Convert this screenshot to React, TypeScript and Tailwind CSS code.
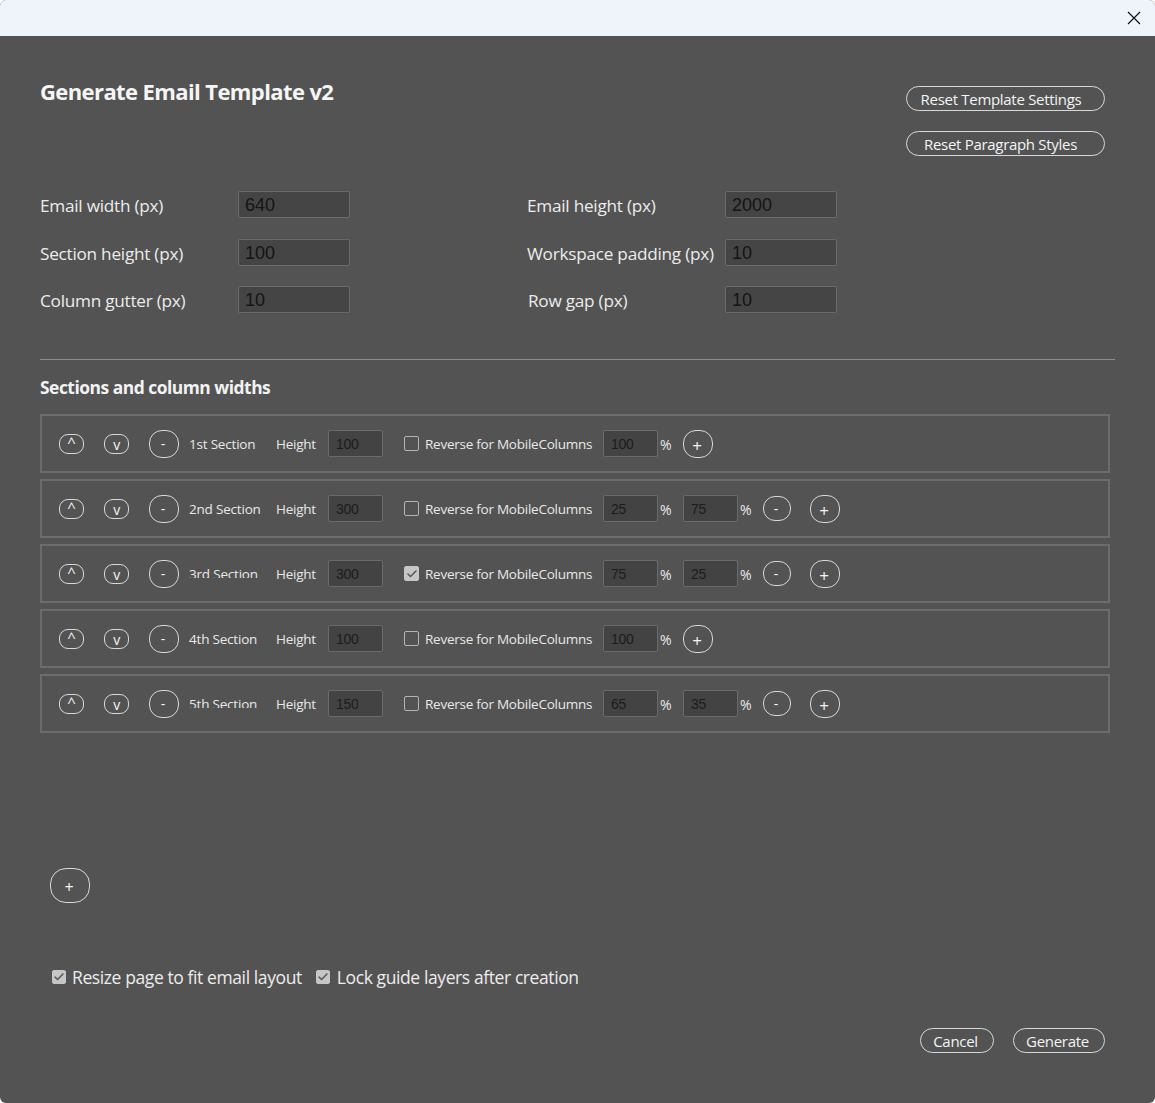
import { Check } from 'lucide-react';

const FONT = "font-['Open_Sans','Noto_Sans',sans-serif]";

interface PillProps {
  label: string;
  className: string;
}

function Pill({ label, className }: PillProps) {
  return (
    <button
      type="button"
      className={`flex shrink-0 items-center justify-center border border-[#d8d8d8] bg-transparent text-[#f4f4f4] ${className}`}
    >
      {label}
    </button>
  );
}

function Field({ label, value, labelWidth }: { label: string; value: string; labelWidth: string }) {
  return (
    <div className="flex h-[27px] items-center">
      <span className={`pt-[3px] text-[17.2px] tracking-[-0.25px] whitespace-nowrap text-[#ececec] ${labelWidth}`}>{label}</span>
      <input
        readOnly
        value={value}
        className="h-[27px] w-[112px] rounded-[2px] border border-[#6a6a6a] bg-[#454545] px-[6px] pt-[2px] font-['Liberation_Sans',sans-serif] text-[18px] text-[#141414] outline-none"
      />
    </div>
  );
}

function SmallInput({ value }: { value: string }) {
  return (
    <input
      readOnly
      value={value}
      className="h-[27px] w-[55px] shrink-0 rounded-[2px] border border-[#6a6a6a] bg-[#434343] px-[7px] font-['Liberation_Sans',sans-serif] text-[14px] text-[#1c1c1c] outline-none"
    />
  );
}

function Percent() {
  return <span className="w-[25px] shrink-0 pt-px pl-[2px] text-[14px] text-[#e8e8e8]">%</span>;
}

function Tick({ checked, size }: { checked: boolean; size: string }) {
  return (
    <span
      className={`flex shrink-0 items-center justify-center rounded-[2px] border ${size} ${
        checked ? 'border-[#c6c6c6] bg-[#c6c6c6]' : 'border-[#b4b4b4] bg-transparent'
      }`}
    >
      {checked && <Check size={12} strokeWidth={3} className="text-[#555555]" />}
    </span>
  );
}

interface Section {
  name: string;
  height: string;
  reversed: boolean;
  columns: string[];
  clipped: boolean;
}

const sections: Section[] = [
  { name: '1st Section', height: '100', reversed: false, columns: ['100'], clipped: false },
  { name: '2nd Section', height: '300', reversed: false, columns: ['25', '75'], clipped: false },
  { name: '3rd Section', height: '300', reversed: true, columns: ['75', '25'], clipped: true },
  { name: '4th Section', height: '100', reversed: false, columns: ['100'], clipped: false },
  { name: '5th Section', height: '150', reversed: false, columns: ['65', '35'], clipped: true },
];

function SectionRow({ section }: { section: Section }) {
  const two = section.columns.length === 2;
  return (
    <div className="flex h-[59px] w-[1070px] items-center border-2 border-[#6c6c6c] pl-[17px] text-[13.5px] tracking-[-0.25px] text-[#e8e8e8]">
      <Pill label="^" className="h-[20px] w-[25px] rounded-[9px] pb-[2px] text-[15px] leading-none" />
      <Pill label="v" className="ml-[20px] h-[20px] w-[25px] rounded-[9px] pt-[2px] text-[14px] leading-none" />
      <Pill label="-" className="ml-[20px] h-[28px] w-[30px] rounded-[13px] pr-[2px] text-[14px] leading-none" />
      <div className="ml-[10px] h-[20px] w-[87px]">
        <div className={section.clipped ? 'h-[14px] overflow-hidden leading-[20px] tracking-[-0.2px]' : 'leading-[20px] tracking-[-0.2px]'}>
          {section.name}
        </div>
      </div>
      <span className="w-[52px] pt-px">Height</span>
      <SmallInput value={section.height} />
      <span className="ml-[21px]">
        <Tick checked={section.reversed} size="h-[15px] w-[15px]" />
      </span>
      <span className="ml-[6px] w-[178px] whitespace-nowrap pt-px">Reverse for MobileColumns</span>
      <SmallInput value={section.columns[0]} />
      <Percent />
      {two ? (
        <>
          <SmallInput value={section.columns[1]} />
          <Percent />
          <Pill label="-" className="h-[25px] w-[28px] rounded-[12px] pr-[2px] text-[14px] leading-none" />
          <Pill label="+" className="ml-[19px] h-[28px] w-[30px] rounded-[13px] pt-[3px] pr-[2px] text-[17px] leading-none" />
        </>
      ) : (
        <Pill label="+" className="h-[28px] w-[30px] rounded-[13px] pt-[3px] pr-[2px] text-[17px] leading-none" />
      )}
    </div>
  );
}

export default function App() {
  return (
    <div className={`flex h-[1103px] w-[1155px] flex-col overflow-hidden rounded-[6px] bg-[#535353] ${FONT}`}>
      <div className="flex h-9 shrink-0 items-center justify-end bg-[#eef4f9] pr-[14px]">
        <svg width="14" height="14" viewBox="0 0 14 14" fill="none" stroke="#111111" strokeWidth="1.2">
          <path d="M1 1l12 12M13 1L1 13" />
        </svg>
      </div>

      <div className="flex flex-1 flex-col pl-10">
        <div className="flex h-[120px] items-start justify-between pr-[50px]">
          <h1 className="mt-[38px] text-[22px] leading-[34px] font-bold tracking-[-0.6px] text-[#f5f5f5]">
            Generate Email Template v2
          </h1>
          <div className="mt-[50px] flex flex-col gap-5">
            <Pill label="Reset Template Settings" className="h-[25px] w-[199px] rounded-[13px] pt-[2px] pr-[9px] text-[15px] tracking-[-0.3px]" />
            <Pill label="Reset Paragraph Styles" className="h-[25px] w-[199px] rounded-[13px] pt-[2px] pr-[10px] text-[15px] tracking-[-0.3px]" />
          </div>
        </div>

        <div className="mt-[35px] grid w-[797px] grid-cols-[487px_1fr] gap-y-[20.5px]">
          <Field label="Email width (px)" value="640" labelWidth="w-[198px]" />
          <Field label="Email height (px)" value="2000" labelWidth="w-[198px]" />
          <Field label="Section height (px)" value="100" labelWidth="w-[198px]" />
          <Field label="Workspace padding (px)" value="10" labelWidth="w-[198px]" />
          <Field label="Column gutter (px)" value="10" labelWidth="w-[198px]" />
          <Field label="Row gap (px)" value="10" labelWidth="w-[198px] pl-px" />
        </div>

        <div className="mt-[46px] h-px w-[1075px] bg-[#8d8d8d]" />
        <h2 className="mt-[15px] text-[17.4px] leading-6 font-bold tracking-[-0.48px] text-[#f2f2f2]">
          Sections and column widths
        </h2>

        <div className="mt-[15px] flex flex-col gap-[6px]">
          {sections.map((s) => (
            <SectionRow key={s.name} section={s} />
          ))}
        </div>

        <Pill label="+" className="mt-[135px] ml-[10px] h-[35px] w-[40px] rounded-[16px] pt-[3px] pr-[2px] text-[16px] leading-none" />

        <div className="mt-[63px] ml-[12px] flex h-[22px] items-center text-[17.5px] tracking-[-0.4px] text-[#ececec]">
          <Tick checked size="h-[14px] w-[14px]" />
          <span className="ml-[6px]">Resize page to fit email layout</span>
          <span className="ml-[14px]">
            <Tick checked size="h-[14px] w-[14px]" />
          </span>
          <span className="ml-[7px]">Lock guide layers after creation</span>
        </div>

        <div className="mt-[40px] flex justify-end gap-[19px] pr-[50px]">
          <Pill label="Cancel" className="h-[25px] w-[74px] rounded-[13px] pt-[2px] pr-[3px] text-[15px] tracking-[-0.3px]" />
          <Pill label="Generate" className="h-[25px] w-[92px] rounded-[13px] pt-[2px] pr-[3px] text-[15px] tracking-[-0.3px]" />
        </div>
      </div>
    </div>
  );
}
